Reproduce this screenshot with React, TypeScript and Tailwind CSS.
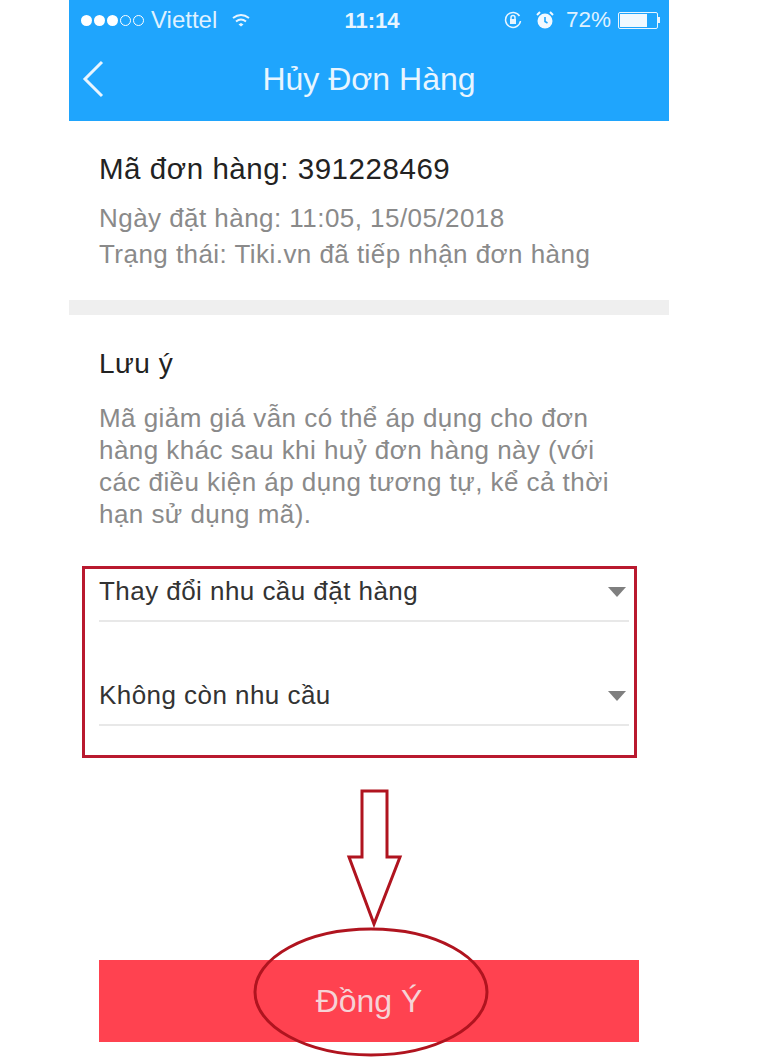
const font = { fontFamily: '"Liberation Sans", Arial, sans-serif' };

function Caret() {
  return (
    <svg width="18" height="10" viewBox="0 0 18 10" className="mt-[2px] shrink-0">
      <path d="M0 0H18L9 10Z" fill="#7f7f7f" />
    </svg>
  );
}

function SelectRow({ label, className }: { label: string; className: string }) {
  return (
    <div className={`flex items-center justify-between border-b-2 border-[#e8e8e8] pb-[3px] pr-[3px] ${className}`}>
      <span className="text-[26px] leading-[30px] tracking-[0.45px] text-[#333333]">{label}</span>
      <Caret />
    </div>
  );
}

export default function App() {
  return (
    <div className="relative h-[1064px] w-[768px] overflow-hidden bg-white" style={font}>
      <div className="ml-[69px] flex w-[600px] flex-col">
        <header className="h-[121px] bg-[#1fa5fd] text-white">
          <div className="flex h-[40px] items-center justify-between pl-[12px] pr-[9px]">
            <div className="flex w-[190px] items-center text-[24px] text-[#dff1ff]">
              <span className="flex items-center gap-[2px]">
                <i className="h-[11px] w-[11px] rounded-full bg-white" />
                <i className="h-[11px] w-[11px] rounded-full bg-white" />
                <i className="h-[11px] w-[11px] rounded-full bg-white" />
                <i className="h-[11px] w-[11px] rounded-full border border-white" />
                <i className="h-[11px] w-[11px] rounded-full border border-white" />
              </span>
              <span className="ml-[7px]">Viettel</span>
              <svg width="18" height="14" viewBox="0 0 18 14" className="ml-[15px]" fill="none" stroke="#e8f5ff" strokeWidth="2">
                <path d="M1 5Q9 -1 17 5" />
                <path d="M4 8.5Q9 4.5 14 8.5" />
                <path d="M6.5 11.5L9 13.5L11.5 11.5L9 10Z" fill="#e8f5ff" stroke="none" />
              </svg>
            </div>
            <span className="text-[22px] font-bold text-[#e8f5ff]">11:14</span>
            <div className="flex w-[187px] items-center justify-end text-[22.5px] text-[#dff1ff]">
              <svg width="20" height="20" viewBox="0 0 20 20" fill="none" stroke="#e8f5ff" strokeWidth="1.5">
                <path d="M16.5 6A7.5 7.5 0 1 0 17.5 11" />
                <rect x="7" y="9" width="6" height="5" fill="#e8f5ff" stroke="none" />
                <path d="M8 9V7.5a2 2 0 0 1 4 0V9" />
              </svg>
              <svg width="20" height="20" viewBox="0 0 20 20" className="ml-[12px]">
                <circle cx="10" cy="11" r="7.5" fill="#f1f9ff" />
                <path d="M10 7V11.5L12.5 13" stroke="#1fa5fd" strokeWidth="1.6" fill="none" />
                <path d="M2 5L5 2M18 5L15 2" stroke="#f1f9ff" strokeWidth="2" />
              </svg>
              <span className="ml-[11px]">72%</span>
              <span className="ml-[7px] flex h-[17px] w-[40px] items-center rounded-[2px] border border-[#e8f5ff] p-[1px]">
                <i className="block h-full w-[27px] bg-[#f1f9ff]" />
              </span>
              <i className="block h-[6px] w-[2px] bg-[#e8f5ff]" />
            </div>
          </div>
          <div className="relative flex h-[78px] items-center justify-center">
            <svg width="24" height="38" viewBox="0 0 24 38" className="absolute left-[12px] top-[20px]" fill="none" stroke="#e8f5ff" strokeWidth="3">
              <path d="M21 2L4 19L21 36" />
            </svg>
            <h1 className="text-[32px] font-normal text-[#e8f5ff]">Hủy Đơn Hàng</h1>
          </div>
        </header>

        <section className="h-[179px] px-[30px] pt-[29px]">
          <p className="text-[29.5px] leading-[38px] tracking-[0.55px] text-[#222222]">Mã đơn hàng: 391228469</p>
          <p className="mt-[12px] text-[26px] leading-[36px] tracking-[0.45px] text-[#8a8a8a]">Ngày đặt hàng: 11:05, 15/05/2018</p>
          <p className="text-[26px] leading-[36px] tracking-[0.45px] text-[#8a8a8a]">Trạng thái: Tiki.vn đã tiếp nhận đơn hàng</p>
        </section>

        <div className="h-[15px] bg-[#efefef]" />

        <section className="px-[30px] pt-[31px]">
          <p className="text-[28px] leading-[36px] tracking-[0.5px] text-[#222222]">Lưu ý</p>
          <p className="mt-[20px] text-[26px] leading-[32px] tracking-[0.45px] text-[#8a8a8a]">
            Mã giảm giá vẫn có thể áp dụng cho đơn hàng khác sau khi huỷ đơn hàng này (với các điều kiện áp dụng tương tự, kể cả thời hạn sử dụng mã).
          </p>
        </section>

        <section className="mt-[35px] pl-[30px] pr-[40px]">
          <SelectRow label="Thay đổi nhu cầu đặt hàng" className="h-[57px]" />
          <SelectRow label="Không còn nhu cầu" className="mt-[47px] h-[57px]" />
        </section>

        <div className="mt-[234px] ml-[30px] flex h-[82px] w-[540px] items-center justify-center bg-[#ff4250]">
          <span className="text-[32px] text-[#f6d3d6]">Đồng Ý</span>
        </div>
      </div>

      <div className="absolute left-[82px] top-[566px] h-[192px] w-[555px] border-[3px] border-[#b9192f]" />

      <svg width="768" height="1064" viewBox="0 0 768 1064" className="absolute left-0 top-0" fill="none" stroke="#b0141f" strokeWidth="3">
        <path d="M362 791H387V857H400L374 924L349 857H362Z" />
        <ellipse cx="371" cy="992" rx="116" ry="63" />
      </svg>
    </div>
  );
}
